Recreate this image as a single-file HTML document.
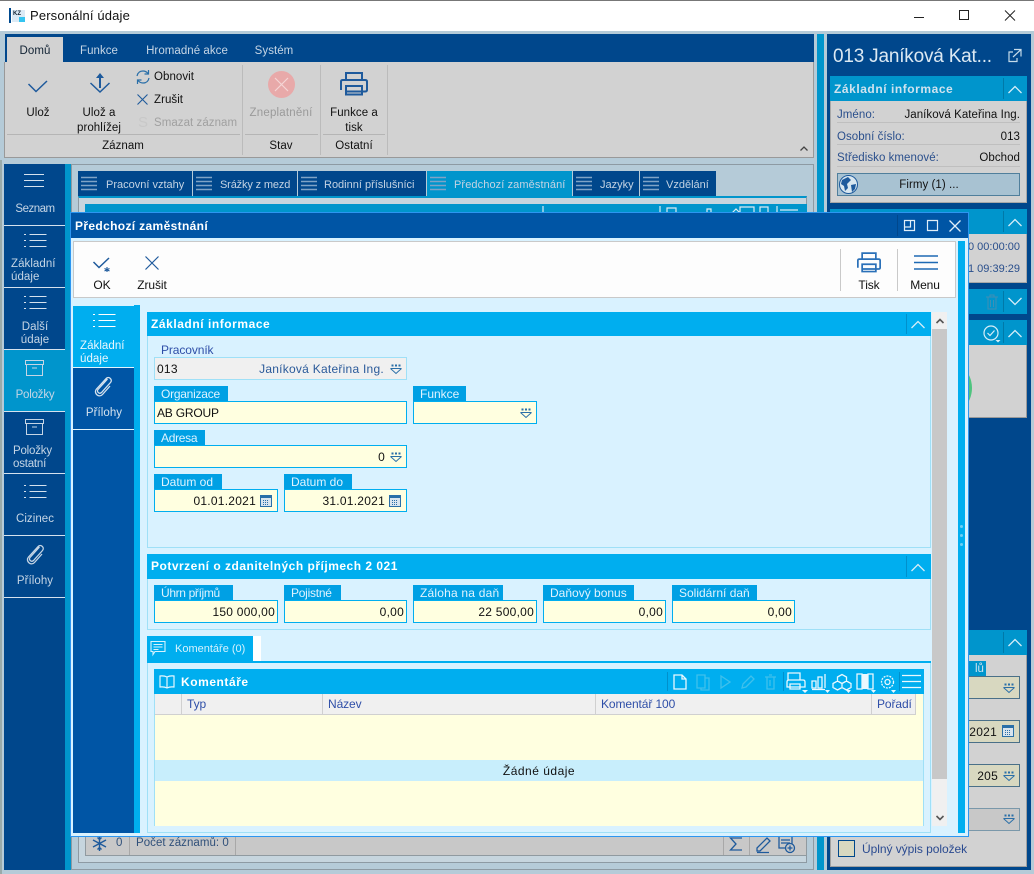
<!DOCTYPE html>
<html lang="cs"><head><meta charset="utf-8"><title>Personální údaje</title>
<style>
html,body{margin:0;padding:0}
body{width:1034px;height:874px;overflow:hidden;position:relative;background:#b5cbd8;font:11.500px/18px "Liberation Sans",sans-serif;letter-spacing:.05px;color:#111}
div,span,svg{position:absolute;box-sizing:border-box}
.t{white-space:nowrap}
.c{white-space:nowrap;transform:translateX(-50%);text-align:center}
.r{white-space:nowrap;transform:translateX(-100%)}
.d{font-size:12px;letter-spacing:.25px;line-height:16px}
.h{font-size:12px;letter-spacing:-.1px;line-height:16px}
.lb{background:#00a0e4;color:#dff3ff;height:15px;line-height:17px;padding-left:7px;white-space:nowrap;font-size:12px;letter-spacing:0}
.f{background:#ffffe0;border:1px solid #00aeef;height:23px;line-height:22px;white-space:nowrap;padding:0 2px;font-size:12px;letter-spacing:.25px}
.f.rt{text-align:right}
.hd{background:#00aeef;color:#fff;font-weight:bold;font-size:12px;line-height:24px;padding-left:4px;white-space:nowrap;letter-spacing:.55px}
.sec{border:1px solid #9fe0f7}
.tab{height:25px;top:171px;background:#00478c}
.tt{white-space:nowrap;top:176px;color:#c3d3e3;font-size:11px;letter-spacing:0}
.nh{background:#0095cc}
svg{overflow:visible;fill:none}
</style></head><body>
<svg width="0" height="0" style="left:0;top:0">
<defs>
<g id="ham" stroke="currentColor" stroke-width="1"><path d="M7.500 .5H24.500M2 .5H4M7.500 6.500H24.500M2 6.500H4M7.500 12.500H24.500M2 12.500H4"/></g>
<g id="dd" stroke="#2a6fa8" stroke-width="1"><path d="M.5 5.500 6 10.500 11.500 5.500M.5 5.500H11.500"/><path d="M1.500 1.500h2v2h-2zM5 1.500h2v2h-2zM8.500 1.500h2v2h-2z" fill="#2a6fa8" stroke="none"/></g>
<g id="cal"><rect x=".5" y="1.500" width="11" height="11" stroke="#2a6fa8" fill="#d8e4ee"/><path d="M.5 1.500h11v2.500H.5z" fill="#2a6fa8"/><path d="M3 6.500h6M3 8.500h6M3 10.500h6" stroke="#2a6fa8" stroke-dasharray="1 1"/></g>
<g id="clip" stroke="currentColor" stroke-width="1.300"><path d="M14.500 3 5 13.500c-1.800 2.200 1.500 5 3.500 3L17.500 6.500c2.500-3-1.800-6.700-4.300-4L3.500 13c-3.500 4 2.500 9.500 6 5.500l7.500-8.500"/></g>
<g id="box" stroke="#c5d5e5" stroke-width="1"><path d="M.5 .5h18v4H.5zM1.500 4.500v11h16v-11M7 8h5"/></g>
<g id="pr"><path d="M6 8V1h16v7M1 18V9.500Q1 8 3 8h22q2 0 2 1.500V18q0 1.500-2 1.500H6M6 19.500V14h16v8.500H6z" stroke="currentColor" stroke-width="2"/></g>
<path id="chup" d="M.5 8 7 1.500 13.500 8" stroke="#d7eef8" stroke-width="1.300"/>
</defs>
</svg>

<!-- title bar -->
<div style="left:0;top:0;width:1034px;height:31px;background:#fff;border-top:1px solid #777"></div>
<div style="left:9px;top:8px;width:2px;height:15px;background:#004a8f"></div>
<div style="left:12px;top:10px;width:13px;height:12px;background:#dbeaf5"></div>
<div class="t" style="left:13px;top:10px;font:bold 6px/9px 'Liberation Sans',sans-serif;color:#123;letter-spacing:0">KZ</div>
<div style="left:19px;top:17px;width:6px;height:5px;background:#35c4f0"></div>
<div class="t" style="left:30px;top:8px;font-size:13px;line-height:16px;letter-spacing:.15px">Personální údaje</div>
<svg style="left:914px;top:10px" width="102" height="12" stroke="#222"><path d="M0 7.500H10M45.500 .5h9v9h-9zM91 .5l10 10M101 .5l-10 10"/></svg>

<!-- ribbon -->
<div style="left:5px;top:34px;width:809px;height:28px;background:#00478c"></div>
<div style="left:4px;top:62px;width:810px;height:96px;background:#d2d2d2;border:1px solid #999;border-top:0"></div>
<div style="left:7px;top:37px;width:56px;height:25px;background:#d2d2d2"></div>
<div class="c" style="left:35px;top:42px;color:#123">Domů</div>
<div class="c" style="left:99px;top:42px;color:#c5d5e5">Funkce</div>
<div class="c" style="left:187px;top:42px;color:#c5d5e5">Hromadné akce</div>
<div class="c" style="left:274px;top:42px;color:#c5d5e5">Systém</div>
<div style="left:242px;top:65px;width:1px;height:90px;background:#bbb"></div>
<div style="left:320px;top:65px;width:1px;height:90px;background:#bbb"></div>
<div style="left:387px;top:65px;width:1px;height:90px;background:#bbb"></div>
<div style="left:7px;top:134px;width:233px;height:1px;background:#b5b5b5"></div>
<div style="left:245px;top:134px;width:73px;height:1px;background:#b5b5b5"></div>
<div style="left:323px;top:134px;width:62px;height:1px;background:#b5b5b5"></div>
<div class="c" style="left:123px;top:137px">Záznam</div>
<div class="c" style="left:281px;top:137px">Stav</div>
<div class="c" style="left:354px;top:137px">Ostatní</div>
<svg style="left:28px;top:80px" width="20" height="13" stroke="#1e5a9c" stroke-width="1.500"><path d="M.5 4 8 11.500 19 1"/></svg>
<div class="c" style="left:38px;top:104px">Ulož</div>
<svg style="left:90px;top:72px" width="20" height="22" stroke="#1e5a9c" stroke-width="1.500"><path d="M.5 11 10 20 19.500 11"/><path d="M10 3V16" stroke-width="2"/><path d="M6 6 10 1 14 6z" fill="#1e5a9c" stroke="none"/></svg>
<div class="c" style="left:99px;top:104px">Ulož a</div>
<div class="c" style="left:99px;top:119px">prohlížej</div>
<svg style="left:136px;top:70px" width="14" height="14" stroke="#2a6fa8" stroke-width="1.200"><path d="M1 6Q2 1 7 1q3 0 5 2.500M13 8q-1 5-6 5-3 0-5-2.500"/><path d="M12.500 0v4h-4M1.500 14v-4h4"/></svg>
<div class="t" style="left:154px;top:68px">Obnovit</div>
<svg style="left:137px;top:94px" width="12" height="12" stroke="#1e5a9c" stroke-width="1.100"><path d="M.5 .5l10 10M10.500 .5l-10 10"/></svg>
<div class="t" style="left:154px;top:91px">Zrušit</div>
<div class="t" style="left:138px;top:114px;color:#c8c8c8;font-size:15px">S</div>
<div class="t" style="left:154px;top:114px;color:#a0a0a0">Smazat záznam</div>
<svg style="left:268px;top:71px" width="27" height="27"><circle cx="13.500" cy="13.500" r="13.500" fill="#e8a9a9"/><path d="M7 7 20 20M20 7 7 20" stroke="#f5d6d6" stroke-width="1.200"/></svg>
<div class="c" style="left:281px;top:104px;color:#9a9a9a;letter-spacing:.2px">Zneplatnění</div>
<svg style="left:340px;top:72px;color:#1e5a9c" width="28" height="25"><use href="#pr"/></svg>
<div class="c" style="left:354px;top:104px">Funkce a</div>
<div class="c" style="left:354px;top:119px">tisk</div>
<svg style="left:800px;top:146px" width="8" height="5" stroke="#444" stroke-width="1.300"><path d="M.5 4.500 4 1l3.500 3.500"/></svg>

<!-- left nav -->
<div style="left:0;top:160px;width:2px;height:714px;background:#9aa"></div>
<div style="left:4px;top:164px;width:61px;height:706px;background:#00478c"></div>
<div style="left:65px;top:164px;width:6px;height:706px;background:#0095cc"></div>
<div style="left:4px;top:350px;width:61px;height:61px;background:#0095cc"></div>
<div style="left:4px;top:225px;width:61px;height:1px;background:#d5e2ee"></div>
<div style="left:4px;top:287px;width:61px;height:1px;background:#d5e2ee"></div>
<div style="left:4px;top:349px;width:61px;height:1px;background:#d5e2ee"></div>
<div style="left:4px;top:411px;width:61px;height:1px;background:#d5e2ee"></div>
<div style="left:4px;top:473px;width:61px;height:1px;background:#d5e2ee"></div>
<div style="left:4px;top:535px;width:61px;height:1px;background:#d5e2ee"></div>
<div style="left:4px;top:597px;width:61px;height:1px;background:#d5e2ee"></div>
<svg style="left:24px;top:174px" width="20" height="17" stroke="#d5e2ee"><path d="M0 .5H20M0 6.500H20M0 12.500H20"/></svg>
<div class="c" style="left:35px;top:200px;color:#c5d5e5;letter-spacing:-.5px">Seznam</div>
<svg style="left:22px;top:234px;color:#d5e2ee" width="26" height="14"><use href="#ham"/></svg>
<div class="t" style="left:11px;top:258px;color:#c5d5e5;line-height:13px">Základní<br>údaje</div>
<svg style="left:22px;top:296px;color:#d5e2ee" width="26" height="14"><use href="#ham"/></svg>
<div class="c" style="left:35px;top:321px;color:#c5d5e5;line-height:13px">Další<br>údaje</div>
<svg style="left:25px;top:360px" width="19" height="17"><use href="#box"/></svg>
<div class="c" style="left:35px;top:386px;color:#c5d5e5;letter-spacing:-.2px">Položky</div>
<svg style="left:25px;top:419px" width="19" height="17"><use href="#box"/></svg>
<div class="t" style="left:13px;top:445px;color:#c5d5e5;line-height:13px;letter-spacing:-.2px">Položky<br>ostatní</div>
<svg style="left:22px;top:485px;color:#d5e2ee" width="26" height="14"><use href="#ham"/></svg>
<div class="c" style="left:35px;top:510px;color:#c5d5e5">Cizinec</div>
<svg style="left:25px;top:544px;color:#c5d5e5" width="20" height="22"><use href="#clip"/></svg>
<div class="c" style="left:35px;top:572px;color:#c5d5e5">Přílohy</div>

<!-- main behind -->
<div style="left:71px;top:164px;width:743px;height:706px;border:1px solid #8d9aa3"></div>
<div class="tab" style="left:78px;width:114px"></div>
<div class="tab" style="left:193px;width:104px"></div>
<div class="tab" style="left:298px;width:128px"></div>
<div class="tab" style="left:427px;width:145px;background:#0095cc"></div>
<div class="tab" style="left:573px;width:66px"></div>
<div class="tab" style="left:640px;width:76px"></div>
<svg style="left:78px;top:171px" width="640" height="25" stroke="#7fa3c6" stroke-width="1.500"><path d="M3 6.500H19M3 10.500H19M3 14.500H19M3 18.500H19M118 6.500H134M118 10.500H134M118 14.500H134M118 18.500H134M223 6.500H239M223 10.500H239M223 14.500H239M223 18.500H239M352 6.500H368M352 10.500H368M352 14.500H368M352 18.500H368M498 6.500H514M498 10.500H514M498 14.500H514M498 18.500H514M565 6.500H581M565 10.500H581M565 14.500H581M565 18.500H581"/></svg>
<div class="tt" style="left:106px">Pracovní vztahy</div>
<div class="tt" style="left:220px;letter-spacing:-.15px">Srážky z mezd</div>
<div class="tt" style="left:324px">Rodinní příslušníci</div>
<div class="tt" style="left:454px;letter-spacing:.1px">Předchozí zaměstnání</div>
<div class="tt" style="left:600px">Jazyky</div>
<div class="tt" style="left:666px">Vzdělání</div>
<div style="left:78px;top:196px;width:729px;height:667px;background:#c6d5de;border:1px solid #8d9aa3;border-top:2px solid #0095cc"></div>
<div style="left:85px;top:204px;width:722px;height:10px;background:#0095cc"></div>
<svg style="left:540px;top:204px" width="270" height="10" stroke="#dcebf3"><path d="M3 2V10M120 2V10M127 9V4H136V9M167 9V5h4v4M192 9l4-4 4 4M200 9V3h14v6M220 9V3h8v6M237 2V10M240 6H258" stroke-width="1.200"/></svg>
<div style="left:85px;top:836px;width:722px;height:20px;background:#c8c8c8;border:1px solid #909aa0;border-top:0"></div>
<div style="left:129px;top:836px;width:1px;height:19px;background:#a8a8a8"></div>
<div style="left:235px;top:836px;width:1px;height:19px;background:#a8a8a8"></div>
<div style="left:723px;top:836px;width:1px;height:19px;background:#a8a8a8"></div>
<div style="left:749px;top:836px;width:1px;height:19px;background:#a8a8a8"></div>
<svg style="left:92px;top:836px" width="15" height="15" stroke="#1e5a9c" stroke-width="1.400"><path d="M7.500 0V15M1 4 14 11M14 4 1 11M5.500 1.500 7.500 3.500 9.500 1.500M5.500 13.500 7.500 11.500 9.500 13.500"/></svg>
<div class="t" style="left:116px;top:834px;color:#30507a">0</div>
<div class="t" style="left:136px;top:834px;color:#30507a">Počet záznamů: 0</div>
<svg style="left:729px;top:835px" width="70" height="19" stroke="#1e5a9c" stroke-width="1.300"><path d="M13 3H1.500L7 9 1.500 15H13"/><path d="M28 13 38 3l3 3-10 10h-3zM28 17.500H40"/><path d="M50 1h13v12M50 1v12h6M52 5h9M52 8h9"/><circle cx="61" cy="13" r="4.500" fill="#c8c8c8"/><path d="M61 10.500v5M58.500 13h5"/></svg>

<!-- right panel -->
<div style="left:817px;top:34px;width:7px;height:836px;background:#0095cc"></div>
<div style="left:827px;top:34px;width:204px;height:836px;background:#00478c"></div>
<div class="t" style="left:833px;top:44px;font-size:19px;line-height:26px;color:#dce9f3;letter-spacing:-.2px">013 Janíková Kat...</div>
<svg style="left:1008px;top:48px" width="14" height="15" stroke="#c5dbea" stroke-width="1.200"><path d="M5 4H1v9.500h8V10M6 1.500h7v7M13 1.500 5 9"/></svg>
<div style="left:830px;top:76px;width:197px;height:25px;line-height:26px;padding-left:4px;background:#0095cc;color:#cfe3ef;font-weight:bold;font-size:12px;letter-spacing:.55px;white-space:nowrap">Základní informace</div>
<div style="left:830px;top:101px;width:197px;height:102px;background:#d2d2d2;border:1px solid #a8a8a8;border-top:0"></div>
<div style="left:1003px;top:78px;width:1px;height:21px;background:#0079a8"></div>
<svg style="left:1008px;top:85px" width="14" height="9"><use href="#chup"/></svg>
<div class="t" style="left:837px;top:106px;color:#2a4f8c">Jméno:</div><div class="r" style="left:1020px;top:106px">Janíková Kateřina Ing.</div>
<div style="left:837px;top:122px;width:183px;height:1px;background:#bfbfbf"></div>
<div class="t" style="left:837px;top:128px;color:#2a4f8c">Osobní číslo:</div><div class="r" style="left:1020px;top:128px">013</div>
<div style="left:837px;top:144px;width:183px;height:1px;background:#bfbfbf"></div>
<div class="t" style="left:837px;top:149px;color:#2a4f8c">Středisko kmenové:</div><div class="r" style="left:1020px;top:149px">Obchod</div>
<div style="left:837px;top:166px;width:183px;height:1px;background:#bfbfbf"></div>
<div style="left:837px;top:173px;width:183px;height:23px;background:#a8c2d2;border:1px solid #507f9c"></div>
<div class="c" style="left:929px;top:176px">Firmy (1) ...</div>
<svg style="left:839px;top:175px" width="19" height="19"><circle cx="9.500" cy="9.500" r="9" fill="#d8e6ef" stroke="#1e5a9c"/><path d="M3 5 9 2 12 5 8 9 9 13 6 16 5 11 2 9zM12 10l5-1-1 5-3 3z" fill="#1e5a9c"/></svg>

<div class="nh" style="left:830px;top:209px;width:197px;height:25px"></div>
<div style="left:830px;top:234px;width:197px;height:49px;background:#d2d2d2;border:1px solid #a8a8a8;border-top:0"></div>
<div style="left:1003px;top:211px;width:1px;height:21px;background:#0079a8"></div>
<svg style="left:1008px;top:218px" width="14" height="9"><use href="#chup"/></svg>
<div class="r" style="left:1020px;top:238px;color:#2a4f8c;font-size:11px;letter-spacing:0">0 00:00:00</div>
<div class="r" style="left:1020px;top:260px;color:#2a4f8c;font-size:11px;letter-spacing:0">1 09:39:29</div>
<div class="nh" style="left:830px;top:289px;width:197px;height:25px"></div>
<div style="left:1003px;top:291px;width:1px;height:21px;background:#0079a8"></div>
<svg style="left:1008px;top:297px" width="14" height="9" stroke="#d7eef8" stroke-width="1.300"><path d="M.5 1 7 7.500 13.500 1"/></svg>
<svg style="left:985px;top:294px" width="14" height="16" stroke="#3f8fb5"><path d="M1 3H13M3 3V15H11V3M5 3V1H9V3M5.500 6V13M8.500 6V13"/></svg>
<div class="nh" style="left:830px;top:320px;width:197px;height:25px"></div>
<div style="left:830px;top:345px;width:197px;height:73px;background:#d2d2d2;border:1px solid #9a9a9a;border-top:0"></div>
<div style="left:1003px;top:322px;width:1px;height:21px;background:#0079a8"></div>
<svg style="left:1008px;top:329px" width="14" height="9"><use href="#chup"/></svg>
<svg style="left:983px;top:325px" width="18" height="18" stroke="#d7eef8" stroke-width="1.200"><circle cx="8" cy="8" r="7"/><path d="M4.500 8 7 10.500 11.500 5.500"/><path d="M12.500 15h5l-2.500 2.500z" fill="#d7eef8" stroke="none"/></svg>
<div style="left:914px;top:359px;width:58px;height:58px;border-radius:50%;background:#4ec47e"></div>
<div class="nh" style="left:830px;top:630px;width:197px;height:25px"></div>
<div style="left:830px;top:655px;width:197px;height:212px;background:#d2d2d2;border:1px solid #a0a0a0;border-top:0"></div>
<div style="left:1003px;top:632px;width:1px;height:21px;background:#0079a8"></div>
<svg style="left:1008px;top:638px" width="14" height="9"><use href="#chup"/></svg>
<div style="left:960px;top:661px;width:26px;height:15px;background:#0095cc;color:#cfe3ef;line-height:16px;text-align:right;padding-right:2px;white-space:nowrap">lů</div>
<div style="left:960px;top:676px;width:60px;height:23px;background:#d8d8c0;border:1px solid #4a7088"></div>
<svg style="left:1003px;top:682px" width="12" height="12"><use href="#dd"/></svg>
<div style="left:960px;top:720px;width:60px;height:23px;background:#d8d8c0;border:1px solid #4a7088"></div>
<div class="r d" style="left:997px;top:724px">2021</div>
<svg style="left:1002px;top:724px" width="13" height="14"><use href="#cal"/></svg>
<div style="left:960px;top:764px;width:60px;height:23px;background:#d8d8c0;border:1px solid #4a7088"></div>
<div class="r d" style="left:998px;top:768px">205</div>
<svg style="left:1003px;top:770px" width="12" height="12"><use href="#dd"/></svg>
<div style="left:960px;top:808px;width:60px;height:23px;background:#c8c8c8;border:1px solid #7a98aa"></div>
<svg style="left:1003px;top:813px" width="12" height="12"><use href="#dd"/></svg>
<div style="left:838px;top:840px;width:17px;height:17px;background:#d8d8c0;border:1px solid #00478c"></div>
<div class="t" style="left:862px;top:841px;color:#2a4a90;font-size:12px;line-height:16px;letter-spacing:-.05px">Úplný výpis položek</div>

<!-- dialog -->
<div style="left:70px;top:212px;width:899px;height:625px;background:#d9f2ff;border:1px solid #2c96f0"></div>
<div style="left:71px;top:213px;width:897px;height:25px;background:#0055a5"></div>
<div class="t" style="left:75px;top:218px;color:#fff;font-weight:bold;font-size:12px;line-height:16px;letter-spacing:.35px">Předchozí zaměstnání</div>
<div style="left:897px;top:215px;width:1px;height:21px;background:#00478c"></div>
<svg style="left:904px;top:220px" width="58" height="12" stroke="#e0eef8" stroke-width="1.200"><path d="M.5 .5h10v10H.5zM.5 7h6V.5M23.500 .5h10v10h-10z"/><path d="M45.500 .5l11 11M56.500 .5l-11 11" stroke-width="1.300"/></svg>
<div style="left:73px;top:241px;width:883px;height:57px;border:1px solid #c9c9c9;background:#fdfdfd"></div>
<svg style="left:93px;top:256px" width="20" height="18" stroke="#1e5a9c" stroke-width="1.500"><path d="M.5 6 6 11.500 16 2"/><path d="M14 11v5M11.500 12.500l5 2.500M16.500 12.500l-5 2.500" stroke-width="1.100"/></svg>
<div class="c h" style="left:102px;top:277px">OK</div>
<svg style="left:145px;top:256px" width="14" height="14" stroke="#1e5a9c" stroke-width="1.200"><path d="M.5 .5l13 13M13.500 .5l-13 13"/></svg>
<div class="c h" style="left:152px;top:277px">Zrušit</div>
<div style="left:840px;top:249px;width:1px;height:42px;background:#c9c9c9"></div>
<div style="left:897px;top:249px;width:1px;height:42px;background:#c9c9c9"></div>
<svg style="left:857px;top:252px;color:#2a70b8" width="24" height="22" viewBox="0 0 28 25"><use href="#pr"/></svg>
<div class="c h" style="left:869px;top:277px">Tisk</div>
<svg style="left:914px;top:255px" width="24" height="15" stroke="#1e6ab4" stroke-width="1.400"><path d="M0 1H24M0 7.500H24M0 14H24"/></svg>
<div class="c h" style="left:925px;top:277px">Menu</div>
<div style="left:958px;top:241px;width:7px;height:592px;background:#00aeef"></div>
<div style="left:960px;top:525px;width:3px;height:3px;background:#6fd0f5;border-radius:50%"></div>
<div style="left:960px;top:534px;width:3px;height:3px;background:#6fd0f5;border-radius:50%"></div>
<div style="left:960px;top:543px;width:3px;height:3px;background:#6fd0f5;border-radius:50%"></div>

<!-- dialog side tabs -->
<div style="left:73px;top:306px;width:61px;height:527px;background:#0055a5"></div>
<div style="left:73px;top:306px;width:61px;height:61px;background:#00aeef"></div>
<div style="left:134px;top:305px;width:6px;height:528px;background:#00aeef"></div>
<div style="left:73px;top:367px;width:61px;height:1px;background:#e4f4fc"></div>
<div style="left:73px;top:429px;width:61px;height:1px;background:#e4f4fc"></div>
<svg style="left:91px;top:314px;color:#fff" width="26" height="14"><use href="#ham"/></svg>
<div class="t" style="left:80px;top:340px;color:#e9f7fe;line-height:13px">Základní<br>údaje</div>
<svg style="left:93px;top:376px;color:#d5e2ee" width="20" height="22"><use href="#clip"/></svg>
<div class="c" style="left:104px;top:404px;color:#d5e2ee">Přílohy</div>

<!-- section 1 -->
<div class="sec" style="left:147px;top:312px;width:784px;height:236px"></div>
<div class="hd" style="left:147px;top:312px;width:784px;height:24px">Základní informace</div>
<div style="left:906px;top:314px;width:1px;height:20px;background:#0090cc"></div>
<svg style="left:911px;top:320px" width="14" height="9"><use href="#chup"/></svg>
<div class="t h" style="left:161px;top:342px;color:#2f4fa8">Pracovník</div>
<div style="left:154px;top:357px;width:253px;height:23px;background:#f0f0f0;border:1px solid #9fe0f7"></div>
<div class="t d" style="left:157px;top:361px">013</div>
<div class="r d" style="left:384px;top:361px;color:#2a5a9a">Janíková Kateřina Ing.</div>
<svg style="left:390px;top:363px" width="12" height="12"><use href="#dd"/></svg>

<div class="lb" style="left:154px;top:386px;width:74px;letter-spacing:-.25px">Organizace</div>
<div class="f" style="left:154px;top:401px;width:253px;letter-spacing:-.2px">AB GROUP</div>
<div class="lb" style="left:413px;top:386px;width:53px">Funkce</div>
<div class="f" style="left:413px;top:401px;width:124px"></div>
<svg style="left:520px;top:407px" width="12" height="12"><use href="#dd"/></svg>
<div class="lb" style="left:154px;top:430px;width:51px;letter-spacing:-.3px">Adresa</div>
<div class="f rt" style="left:154px;top:445px;width:253px;padding-right:21px">0</div>
<svg style="left:390px;top:451px" width="12" height="12"><use href="#dd"/></svg>
<div class="lb" style="left:154px;top:474px;width:68px">Datum od</div>
<div class="f rt" style="left:154px;top:489px;width:124px;padding-right:21px">01.01.2021</div>
<svg style="left:260px;top:494px" width="13" height="14"><use href="#cal"/></svg>
<div class="lb" style="left:284px;top:474px;width:68px">Datum do</div>
<div class="f rt" style="left:284px;top:489px;width:123px;padding-right:21px">31.01.2021</div>
<svg style="left:389px;top:494px" width="13" height="14"><use href="#cal"/></svg>

<!-- section 2 -->
<div class="sec" style="left:147px;top:554px;width:784px;height:76px"></div>
<div class="hd" style="left:147px;top:554px;width:784px;height:25px;line-height:25px;letter-spacing:.5px">Potvrzení o zdanitelných příjmech 2 021</div>
<div style="left:906px;top:556px;width:1px;height:21px;background:#0090cc"></div>
<svg style="left:911px;top:563px" width="14" height="9"><use href="#chup"/></svg>
<div class="lb" style="left:154px;top:585px;width:79px;letter-spacing:-.35px">Úhrn příjmů</div>
<div class="f rt" style="left:154px;top:600px;width:124px">150 000,00</div>
<div class="lb" style="left:284px;top:585px;width:57px;letter-spacing:-.25px">Pojistné</div>
<div class="f rt" style="left:284px;top:600px;width:123px">0,00</div>
<div class="lb" style="left:413px;top:585px;width:90px;letter-spacing:.2px">Záloha na daň</div>
<div class="f rt" style="left:413px;top:600px;width:124px">22 500,00</div>
<div class="lb" style="left:543px;top:585px;width:91px">Daňový bonus</div>
<div class="f rt" style="left:543px;top:600px;width:123px">0,00</div>
<div class="lb" style="left:672px;top:585px;width:85px">Solidární daň</div>
<div class="f rt" style="left:672px;top:600px;width:123px">0,00</div>

<!-- comments -->
<div style="left:147px;top:636px;width:106px;height:25px;background:#00aeef"></div>
<div style="left:253px;top:636px;width:8px;height:25px;background:#fff"></div>
<div style="left:147px;top:661px;width:784px;height:2px;background:#00aeef"></div>
<svg style="left:150px;top:641px" width="17" height="15" stroke="#d6f2fd" stroke-width="1.100"><path d="M1 .5h14v10H5l-2 3v-3H1zM3.500 3.500h9M3.500 6h9M3.500 8.500h5"/></svg>
<div class="t" style="left:175px;top:640px;color:#d6f2fd;font-size:11px;letter-spacing:0">Komentáře (0)</div>
<div style="left:147px;top:663px;width:1px;height:170px;background:#9fe0f7"></div>
<div style="left:930px;top:663px;width:1px;height:170px;background:#9fe0f7"></div>
<div style="left:147px;top:832px;width:784px;height:1px;background:#9fe0f7"></div>
<div style="left:155px;top:694px;width:769px;height:132px;background:#ffffe0"></div>
<div style="left:154px;top:694px;width:1px;height:132px;background:#9fe0f7"></div>
<div style="left:923px;top:694px;width:1px;height:132px;background:#9fe0f7"></div>
<div style="left:154px;top:669px;width:770px;height:25px;background:#00aeef"></div>
<svg style="left:159px;top:675px" width="18" height="16" stroke="#e6f7fe" stroke-width="1.200"><path d="M8 2Q5 .5 1 1v11q4-.5 7 1 3-1.500 7-1V1q-4-.5-7 1zM8 2V13"/></svg>
<div class="t" style="left:181px;top:674px;color:#fff;font-weight:bold;font-size:12px;line-height:16px;letter-spacing:.55px">Komentáře</div>
<div style="left:155px;top:694px;width:761px;height:21px;background:#f0f0f0;border-bottom:1px solid #d0d0d0"></div>
<div style="left:181px;top:694px;width:1px;height:20px;background:#d0d0d0"></div>
<div style="left:322px;top:694px;width:1px;height:20px;background:#d0d0d0"></div>
<div style="left:595px;top:694px;width:1px;height:20px;background:#d0d0d0"></div>
<div style="left:871px;top:694px;width:1px;height:20px;background:#d0d0d0"></div>
<div style="left:915px;top:694px;width:1px;height:21px;background:#d0d0d0"></div>
<div class="t h" style="left:187px;top:696px;color:#2f4fa8">Typ</div>
<div class="t h" style="left:328px;top:696px;color:#2f4fa8">Název</div>
<div class="t h" style="left:601px;top:696px;color:#2f4fa8">Komentář 100</div>
<div class="t h" style="left:877px;top:696px;color:#2f4fa8">Pořadí</div>
<div style="left:155px;top:760px;width:768px;height:21px;background:#c8eefc"></div>
<div class="c" style="left:539px;top:763px;font-size:12px;line-height:16px;letter-spacing:.5px">Žádné údaje</div>
<svg style="left:660px;top:669px" width="265" height="25" stroke="#eaf8fe" stroke-width="1.300">
<path d="M7.500 3V22M123.500 3V22M239.500 3V22" stroke="#0090cc" stroke-width="1"/>
<path d="M14 6h8l4 4v10H14zM22 6v4h4"/>
<g stroke="#3fc0ec"><path d="M37 6h8v13h-8zM45 9h4v12h-8v-2"/><path d="M61 7l9 6-9 6z"/><path d="M82 19l1-4 8-8 3 3-8 8z"/><path d="M105 8h11M107 8v12h7V8M109 6h3M110 11v6"/></g>
<path d="M128 11V4h12v7M127 18v-5q0-2 2-2h14q2 0 2 2v5h-17zM130 15h10v5h-10z"/>
<path d="M152 12h4v7h-4zM158 8h4v11h-4zM165 5v14M152 20.500h13"/>
<path d="M177.500 8l4.500-2.500 4.500 2.500v4l-4.500 2.500-4.500-2.500zM173 14.500l4.500-2.500 4.500 2.500v4l-4.500 2.500-4.500-2.500zM182 14.500l4.500-2.500 4.500 2.500v4l-4.500 2.500-4.500-2.500z"/>
<path d="M197 5h5v15h-5zM208 5h5v15h-5z"/><path d="M202 5h6v15h-6z" fill="#eaf8fe" stroke="none"/>
<circle cx="227.500" cy="13" r="6" stroke-dasharray="2 1"/><circle cx="227.500" cy="13" r="2.500"/>
<path d="M242 6.500H261M242 12.500H261M242 18.500H261"/>
<path d="M142 21h6l-3 3zM165 21h5l-2.500 3zM186 21h5l-2.500 3zM211 21h5l-2.500 3zM231 21h5l-2.500 3z" fill="#eaf8fe" stroke="none"/></svg>

<!-- scrollbar -->
<div style="left:932px;top:312px;width:15px;height:514px;background:#f0f0f0"></div>
<div style="left:932px;top:329px;width:15px;height:450px;background:#c8c8c8"></div>
<svg style="left:936px;top:318px" width="8" height="6" stroke="#555" stroke-width="1.600"><path d="M.5 5 4 1.500 7.500 5"/></svg>
<svg style="left:936px;top:815px" width="8" height="6" stroke="#555" stroke-width="1.600"><path d="M.5 1 4 4.500 7.500 1"/></svg>
</body></html>
